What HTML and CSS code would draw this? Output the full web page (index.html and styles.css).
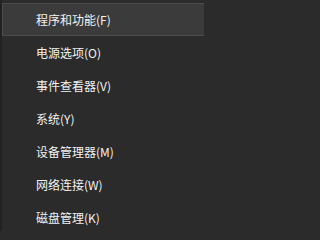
FILE: index.html
```html
<!DOCTYPE html>
<html lang="zh-CN">
<head>
<meta charset="utf-8">
<link rel="stylesheet" href="styles.css">
</head>
<body>
<div class="menu">
  <ul class="list">
    <li class="item active">程序和功能(F)</li>
    <li class="item">电源选项(O)</li>
    <li class="item">事件查看器(V)</li>
    <li class="item">系统(Y)</li>
    <li class="item">设备管理器(M)</li>
    <li class="item">网络连接(W)</li>
    <li class="item">磁盘管理(K)</li>
  </ul>
</div>
</body>
</html>
```
FILE: styles.css
```css
html, body {
  margin: 0;
  padding: 0;
  background: #2b2b2b;
  overflow: hidden;
}
.menu {
  width: 204px;
  height: 231px;
  background: #2b2b2b;
  border-left: 2px solid #222222;
  box-sizing: border-box;
  padding-top: 3px;
  overflow: hidden;
}
.list {
  list-style: none;
  margin: 0;
  padding: 0;
}
.item {
  height: 33px;
  box-sizing: border-box;
  display: flex;
  align-items: center;
  padding-left: 33px;
  color: #f2f2f2;
  font-family: "Noto Sans CJK SC", "Microsoft YaHei", sans-serif;
  font-size: 12px;
  border: 1px solid transparent;
  white-space: nowrap;
}
.item.active {
  background: #3b3b3b;
  border-color: #4c4c4c;
  border-right: none;
}
```
